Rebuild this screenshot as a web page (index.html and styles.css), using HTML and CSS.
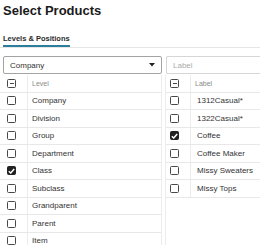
FILE: index.html
```html
<!DOCTYPE html>
<html lang="en">
<head>
    <meta charset="UTF-8">
    <meta name="viewport" content="width=device-width, initial-scale=1.0">
    <title>Select Products</title>
    <link rel="stylesheet" href="styles.css">
</head>
<body>
    <h1 class="title">Select Products</h1>
    <div class="tabs">
        <span class="tab active">Levels &amp; Positions</span>
    </div>

    <div class="panels">
        <div class="panel left">
            <div class="select">
                <span>Company</span>
                <svg class="arrow" width="6" height="4" viewBox="0 0 6 4"><path d="M0 0h6L3 3.5z" fill="#222"/></svg>
            </div>
            <div class="grid">
                <div class="row head"><div class="cb-cell"><span class="cb minus"><i></i></span></div><div class="txt">Level</div></div>
                <div class="row"><div class="cb-cell"><span class="cb"></span></div><div class="txt">Company</div></div>
                <div class="row"><div class="cb-cell"><span class="cb"></span></div><div class="txt">Division</div></div>
                <div class="row"><div class="cb-cell"><span class="cb"></span></div><div class="txt">Group</div></div>
                <div class="row"><div class="cb-cell"><span class="cb"></span></div><div class="txt">Department</div></div>
                <div class="row"><div class="cb-cell"><span class="cb checked"><svg width="7" height="6" viewBox="0 0 7 6"><path d="M0.8 3.2L2.7 5L6.2 0.9" fill="none" stroke="#fff" stroke-width="1.5"/></svg></span></div><div class="txt">Class</div></div>
                <div class="row"><div class="cb-cell"><span class="cb"></span></div><div class="txt">Subclass</div></div>
                <div class="row"><div class="cb-cell"><span class="cb"></span></div><div class="txt">Grandparent</div></div>
                <div class="row"><div class="cb-cell"><span class="cb"></span></div><div class="txt">Parent</div></div>
                <div class="row"><div class="cb-cell"><span class="cb"></span></div><div class="txt">Item</div></div>
            </div>
        </div>

        <div class="panel right">
            <div class="input">Label</div>
            <div class="grid">
                <div class="row head"><div class="cb-cell"><span class="cb minus"><i></i></span></div><div class="txt">Label</div></div>
                <div class="row"><div class="cb-cell"><span class="cb"></span></div><div class="txt">1312Casual*</div></div>
                <div class="row"><div class="cb-cell"><span class="cb"></span></div><div class="txt">1322Casual*</div></div>
                <div class="row"><div class="cb-cell"><span class="cb checked"><svg width="7" height="6" viewBox="0 0 7 6"><path d="M0.8 3.2L2.7 5L6.2 0.9" fill="none" stroke="#fff" stroke-width="1.5"/></svg></span></div><div class="txt">Coffee</div></div>
                <div class="row"><div class="cb-cell"><span class="cb"></span></div><div class="txt">Coffee Maker</div></div>
                <div class="row"><div class="cb-cell"><span class="cb"></span></div><div class="txt">Missy Sweaters</div></div>
                <div class="row"><div class="cb-cell"><span class="cb"></span></div><div class="txt">Missy Tops</div></div>
            </div>
        </div>
    </div>
</body>
</html>
```

FILE: styles.css
```css
body {
    margin: 0;
    background-color: #fff;
    font-family: "Liberation Sans", Arial, sans-serif;
    color: #333;
    overflow: hidden;
}
.title {
    margin: 3px 0 0 3px;
    font-size: 13px;
    font-weight: bold;
    line-height: 15px;
    color: #1a1a1a;
}
.tabs {
    margin-top: 9px;
    padding-left: 3px;
    border-bottom: 1px solid #e6e6e6;
}
.tab {
    display: inline-block;
    font-size: 7.5px;
    font-weight: bold;
    line-height: 10px;
    color: #2b2b2b;
    padding-bottom: 1px;
}
.tab.active {
    border-bottom: 2px solid #2c7f9c;
}
.panels {
    display: flex;
    gap: 3px;
    margin-top: 8px;
}
.panel.left {
    width: 162px;
    flex: none;
}
.panel.right {
    flex: 1;
}
.select {
    margin-left: 3px;
    height: 18px;
    box-sizing: border-box;
    border: 1px solid #a3a3a3;
    border-radius: 2px;
    display: flex;
    align-items: center;
    justify-content: space-between;
    padding: 0 6px 0 6px;
    font-size: 8px;
    color: #333;
}
.arrow {
    display: block;
}
.input {
    margin-left: 1px;
    height: 18px;
    box-sizing: border-box;
    border: 1px solid #d6d6d6;
    border-right: none;
    border-radius: 2px 0 0 2px;
    display: flex;
    align-items: center;
    padding-left: 6px;
    font-size: 8px;
    color: #aaa;
}
.grid {
    margin-top: 1px;
    height: 178px;
    box-sizing: border-box;
}
.left .grid {
    border-right: 1px solid #ececec;
}
.right .grid {
    border-left: 1px solid #ececec;
}
.row {
    display: grid;
    grid-template-columns: 28px 1fr;
    height: 17.5px;
    box-sizing: border-box;
    border-bottom: 1px solid #e8e8e8;
    font-size: 8px;
}
.right .row {
    grid-template-columns: 25px 1fr;
}
.cb-cell {
    display: flex;
    align-items: center;
    padding-left: 7px;
    border-right: 1px solid #ececec;
}
.right .cb-cell {
    padding-left: 4px;
}
.txt {
    display: flex;
    align-items: center;
    padding-left: 4px;
    white-space: nowrap;
    overflow: hidden;
}
.right .txt {
    padding-left: 6px;
}
.head .txt {
    font-size: 7px;
    color: #8a8a8a;
}
.right .head .txt {
    padding-left: 4px;
}
.cb {
    width: 9px;
    height: 9px;
    box-sizing: border-box;
    border: 1.5px solid #484848;
    border-radius: 1.5px;
    display: flex;
    align-items: center;
    justify-content: center;
}
.cb.checked {
    background-color: #222;
    border-color: #222;
}
.cb.minus i {
    display: block;
    width: 4px;
    height: 1.5px;
    background-color: #484848;
}
```
